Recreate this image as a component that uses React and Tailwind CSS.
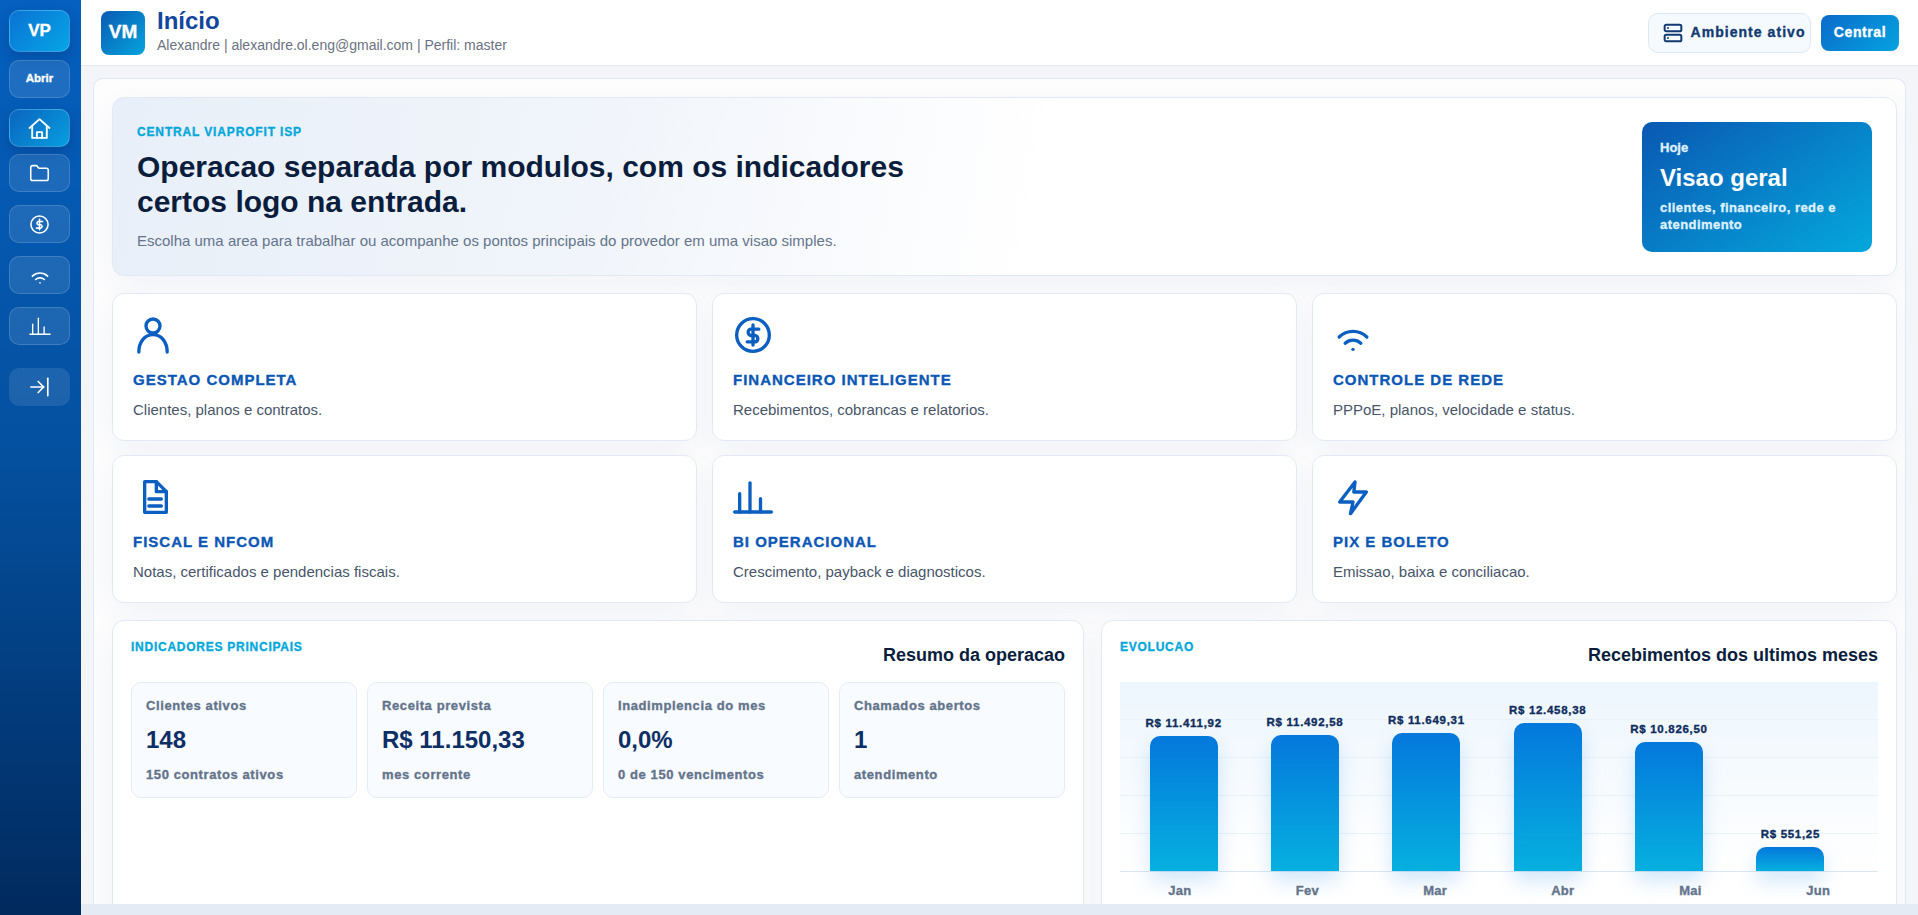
import { Server } from "lucide-react";

const heavy = "[-webkit-text-stroke:0.35px_currentColor]";

// Icons are drawn on a 24 grid so they can be reused in the rail and the cards
function Svg({ size = 22, strokeWidth = 2, children, className = "" }) {
  return (
    <svg
      width={size}
      height={size}
      viewBox="0 0 24 24"
      fill="none"
      stroke="currentColor"
      strokeWidth={strokeWidth}
      strokeLinecap="round"
      strokeLinejoin="round"
      className={className}
    >
      {children}
    </svg>
  );
}

const HomeIcon = (p) => (
  <Svg {...p}>
    <path d="M2.5 11.5 12 3l9.5 8.5" />
    <path d="M5 9.5V21h14V9.5" />
    <path d="M9.5 21v-5.5h5V21" />
  </Svg>
);
const FolderIcon = (p) => (
  <Svg {...p}>
    <path d="M4 20h16a2 2 0 0 0 2-2V8a2 2 0 0 0-2-2h-7.9a2 2 0 0 1-1.7-.9l-.8-1.2A2 2 0 0 0 7.9 3H4a2 2 0 0 0-2 2v13a2 2 0 0 0 2 2Z" />
  </Svg>
);
const DollarIcon = (p) => (
  <Svg {...p}>
    <circle cx="12" cy="12" r="9.8" />
    <path d="M15.5 8.5h-5a2 2 0 0 0 0 3.8h3a2 2 0 0 1 0 3.8h-5" />
    <path d="M12 18V6" />
  </Svg>
);
const WifiIcon = (p) => (
  <Svg {...p}>
    <path d="M3.7 13.2a12 12 0 0 1 16.6 0" />
    <path d="M7.3 16.9a7 7 0 0 1 9.4 0" />
    <path d="M12 20.6h.01" />
  </Svg>
);
const ChartIcon = (p) => (
  <Svg {...p}>
    <path d="M1 21h22" />
    <path d="M4 21V10" />
    <path d="M10.2 21V3.5" />
    <path d="M16.5 21v-8" />
  </Svg>
);
const CollapseIcon = (p) => (
  <Svg {...p}>
    <path d="M2 12h14" />
    <path d="m10 6 6 6-6 6" />
    <path d="M20.5 2.5v19" />
  </Svg>
);
const UserIcon = (p) => (
  <Svg {...p}>
    <circle cx="12" cy="6.6" r="4.2" />
    <path d="M3.5 22.2c0-6 3.5-10.4 8.5-10.4s8.5 4.4 8.5 10.4" />
  </Svg>
);
const FileIcon = (p) => (
  <Svg {...p}>
    <path d="M7 2.8h7l6 6v12.4H7Z" />
    <path d="M14 2.8v6h6" />
    <path d="M9.5 13.2H17" />
    <path d="M9.5 17.4H17" />
  </Svg>
);
const BoltIcon = (p) => (
  <Svg {...p}>
    <path d="M13.2 3 4 15h8l-1.5 7L20 9h-7.5Z" />
  </Svg>
);

const railItems = [
  { icon: <HomeIcon size={25} strokeWidth={1.8} />, active: true, cls: "mt-[11px]" },
  { icon: <FolderIcon size={21} strokeWidth={1.8} />, cls: "mt-[7px]" },
  { icon: <DollarIcon size={21} strokeWidth={1.8} />, cls: "mt-[13px]" },
  { icon: <WifiIcon size={22} strokeWidth={1.8} />, cls: "mt-[13px]" },
  { icon: <ChartIcon size={22} strokeWidth={1.5} />, cls: "mt-[13px]" },
];

const features = [
  { icon: UserIcon, title: "GESTAO COMPLETA", text: "Clientes, planos e contratos." },
  { icon: DollarIcon, title: "FINANCEIRO INTELIGENTE", text: "Recebimentos, cobrancas e relatorios." },
  { icon: WifiIcon, title: "CONTROLE DE REDE", text: "PPPoE, planos, velocidade e status." },
  { icon: FileIcon, title: "FISCAL E NFCOM", text: "Notas, certificados e pendencias fiscais." },
  { icon: ChartIcon, title: "BI OPERACIONAL", text: "Crescimento, payback e diagnosticos." },
  { icon: BoltIcon, title: "PIX E BOLETO", text: "Emissao, baixa e conciliacao." },
];

const metrics = [
  { label: "Clientes ativos", value: "148", sub: "150 contratos ativos" },
  { label: "Receita prevista", value: "R$ 11.150,33", sub: "mes corrente" },
  { label: "Inadimplencia do mes", value: "0,0%", sub: "0 de 150 vencimentos" },
  { label: "Chamados abertos", value: "1", sub: "atendimento" },
];

const bars = [
  { month: "Jan", value: "R$ 11.411,92", height: 135 },
  { month: "Fev", value: "R$ 11.492,58", height: 136 },
  { month: "Mar", value: "R$ 11.649,31", height: 138 },
  { month: "Abr", value: "R$ 12.458,38", height: 148 },
  { month: "Mai", value: "R$ 10.826,50", height: 129 },
  { month: "Jun", value: "R$ 551,25", height: 24 },
];

function Rail() {
  return (
    <aside className="flex w-[81px] shrink-0 flex-col items-center bg-[linear-gradient(180deg,#0560bf_0%,#04509f_50%,#012a5e_100%)] pt-[10px] pr-[2px]">
      <div className={`flex h-[42px] w-[61px] items-center justify-center rounded-[10px] border border-white/20 bg-[linear-gradient(135deg,#0b72d4,#05a6e6)] text-[17px] font-bold text-white shadow-[0_6px_14px_rgba(0,30,90,0.25)] ${heavy}`}>
        VP
      </div>
      <div className={`mt-[8px] flex h-[38px] w-[61px] items-center justify-center rounded-[10px] border border-white/15 bg-white/10 text-[11.5px] font-bold text-white ${heavy}`}>
        Abrir
      </div>
      {railItems.map((item, i) => (
        <div
          key={i}
          className={`${item.cls} flex h-[38px] w-[61px] items-center justify-center rounded-[10px] border text-white ${
            item.active
              ? "border-white/20 bg-[linear-gradient(135deg,#0b64bf,#069fdf)] shadow-[0_6px_14px_rgba(0,30,90,0.25)]"
              : "border-white/15 bg-white/10"
          }`}
        >
          {item.icon}
        </div>
      ))}
      <div className="mt-[23px] flex h-[38px] w-[61px] items-center justify-center rounded-[10px] bg-white/10 text-white">
        <CollapseIcon size={22} strokeWidth={1.8} />
      </div>
    </aside>
  );
}

function TopBar() {
  return (
    <header className="flex h-[66px] shrink-0 items-center justify-between border-b border-[#e4e9f1] bg-white pl-[20px] pr-[19px]">
      <div className="flex items-center gap-[12px]">
        <div className={`flex h-[44px] w-[44px] items-center justify-center rounded-[8px] bg-[linear-gradient(135deg,#0a5bb3,#05a4dd)] text-[19px] font-bold text-white ${heavy}`}>
          VM
        </div>
        <div className="-mt-[3px]">
          <h1 className="text-[24px] leading-[28px] font-semibold text-[#13469b]">Início</h1>
          <p className="text-[14px] leading-[20px] text-[#6b7280]">Alexandre | alexandre.ol.eng@gmail.com | Perfil: master</p>
        </div>
      </div>
      <div className="flex items-center gap-[10px]">
        <div className={`flex h-[40px] w-[163px] items-center justify-center gap-[7px] rounded-[10px] border border-[#dce8f8] bg-[#f5faff] pl-[10px] text-[14px] font-bold tracking-[1.05px] text-[#123a70] ${heavy}`}>
          <Server size={20} strokeWidth={2.4} />
          Ambiente ativo
        </div>
        <div className={`flex h-[36px] w-[78px] items-center justify-center rounded-[8px] bg-[linear-gradient(135deg,#0a6bcb,#05a3df)] text-[14px] font-bold tracking-[0.6px] text-white ${heavy}`}>
          Central
        </div>
      </div>
    </header>
  );
}

function Hero() {
  return (
    <section className="flex h-[179px] shrink-0 items-center justify-between rounded-[12px] border border-[#e0e9f5] bg-[linear-gradient(100deg,#e8eff8_0%,#f1f5fb_28%,#ffffff_52%)] pr-[24px] pl-[24px] shadow-[0_10px_30px_rgba(20,60,120,0.05)]">
      <div className="pt-[1px]">
        <p className={`text-[12px] leading-[16px] font-bold tracking-[0.85px] text-[#05a8da] ${heavy}`}>CENTRAL VIAPROFIT ISP</p>
        <h2 className="mt-[9px] max-w-[800px] text-[30px] leading-[35px] font-bold text-[#0b1d3d]">
          Operacao separada por modulos, com os indicadores certos logo na entrada.
        </h2>
        <p className="mt-[12px] text-[15px] leading-[20px] text-[#64748b]">
          Escolha uma area para trabalhar ou acompanhe os pontos principais do provedor em uma visao simples.
        </p>
      </div>
      <div className="h-[130px] w-[230px] rounded-[10px] bg-[linear-gradient(145deg,#0a58b2,#04a8dd)] p-[18px] text-white">
        <p className={`text-[13px] leading-[16px] font-bold text-[#dff1ff] ${heavy}`}>Hoje</p>
        <p className="mt-[7px] text-[24px] leading-[30px] font-bold">Visao geral</p>
        <p className={`mt-[6px] text-[13px] leading-[17px] font-bold tracking-[0.45px] text-[#dff1ff] ${heavy}`}>
          clientes, financeiro, rede e atendimento
        </p>
      </div>
    </section>
  );
}

function FeatureCard({ icon: Icon, title, text }) {
  return (
    <div className="rounded-[12px] border border-[#e2eaf6] bg-white px-[20px] pt-[21px] pb-[20px] shadow-[0_10px_30px_rgba(20,60,120,0.05)]">
      <Icon size={40} className="text-[#0b5fc0]" />
      <h3 className={`mt-[15px] text-[15px] leading-[20px] font-bold tracking-[1px] text-[#0b57b5] ${heavy}`}>{title}</h3>
      <p className="mt-[10px] text-[15px] leading-[20px] text-[#475569]">{text}</p>
    </div>
  );
}

function Metric({ label, value, sub }) {
  return (
    <div className="h-[116px] rounded-[10px] border border-[#e4ecf8] bg-[#f8fbff] px-[14px] pt-[15px]">
      <p className={`text-[13px] leading-[16px] font-bold tracking-[0.6px] text-[#64748b] ${heavy}`}>{label}</p>
      <p className="mt-[11px] text-[24px] leading-[30px] font-bold text-[#0d2f66]">{value}</p>
      <p className={`mt-[12px] text-[13px] leading-[16px] font-bold tracking-[0.6px] text-[#64748b] ${heavy}`}>{sub}</p>
    </div>
  );
}

function PanelHead({ eyebrow, title }) {
  return (
    <div className="flex h-[43px] items-start justify-between">
      <p className={`text-[12px] leading-[16px] font-bold tracking-[0.75px] text-[#05a8da] ${heavy}`}>{eyebrow}</p>
      <h3 className="mt-[4px] text-[18px] leading-[24px] font-bold text-[#0b1d3d]">{title}</h3>
    </div>
  );
}

function Chart() {
  return (
    <div>
      <div className="h-[190px] border-b border-[#dbe6f3] bg-[repeating-linear-gradient(to_bottom,transparent_0,transparent_37px,#e9f2fb_37px,#e9f2fb_38px),linear-gradient(to_bottom,#edf6fd,#ffffff)] pl-[3px]">
        <div className="grid h-full w-[728px] grid-cols-6">
          {bars.map((bar) => (
            <div key={bar.month} className="flex flex-col items-center justify-end">
              <span className={`mb-[6px] text-[11.5px] leading-[14px] font-bold tracking-[0.7px] whitespace-nowrap text-[#0f2d5c] ${heavy}`}>{bar.value}</span>
              <div
                className="w-[68px] rounded-t-[10px] bg-[linear-gradient(180deg,#0478dc,#06b0df)] shadow-[0_10px_20px_rgba(4,120,220,0.18)]"
                style={{ height: bar.height }}
              />
            </div>
          ))}
        </div>
      </div>
      <div className="-ml-[4px] grid w-[766px] grid-cols-6 pt-[11px]">
        {bars.map((bar) => (
          <span key={bar.month} className={`text-center text-[13px] leading-[16px] font-bold tracking-[0.3px] text-[#64748b] ${heavy}`}>
            {bar.month}
          </span>
        ))}
      </div>
    </div>
  );
}

export default function App() {
  return (
    <div className="flex h-screen w-full overflow-hidden bg-[#e5ebf4] font-['Liberation_Sans',Arial,sans-serif]">
      <Rail />
      <main className="flex min-w-0 flex-1 flex-col">
        <TopBar />
        <div className="min-h-0 flex-1 overflow-hidden bg-[#f3f5f8] pt-[12px] pr-[12px] pl-[12px]">
          <div className="flex h-full flex-col gap-[17px] overflow-hidden rounded-t-[10px] border border-b-0 border-[#dfe8f5] bg-[#fdfdfe] pt-[18px] pr-[8px] pl-[18px]">
            <Hero />
            <div className="grid shrink-0 grid-cols-3 gap-x-[15px] gap-y-[14px]">
              {features.map((f) => (
                <FeatureCard key={f.title} {...f} />
              ))}
            </div>
            <div className="grid shrink-0 grid-cols-[972px_minmax(0,1fr)] gap-[17px]">
              <section className="h-[320px] rounded-[12px] border border-[#e2eaf6] bg-white p-[18px] shadow-[0_10px_30px_rgba(20,60,120,0.05)]">
                <PanelHead eyebrow="INDICADORES PRINCIPAIS" title="Resumo da operacao" />
                <div className="grid grid-cols-4 gap-[10px]">
                  {metrics.map((m) => (
                    <Metric key={m.label} {...m} />
                  ))}
                </div>
              </section>
              <section className="h-[320px] rounded-[12px] border border-[#e2eaf6] bg-white p-[18px] shadow-[0_10px_30px_rgba(20,60,120,0.05)]">
                <PanelHead eyebrow="EVOLUCAO" title="Recebimentos dos ultimos meses" />
                <Chart />
              </section>
            </div>
          </div>
        </div>
        <div className="h-[11px] shrink-0 bg-[#e5ebf4]" />
      </main>
    </div>
  );
}
